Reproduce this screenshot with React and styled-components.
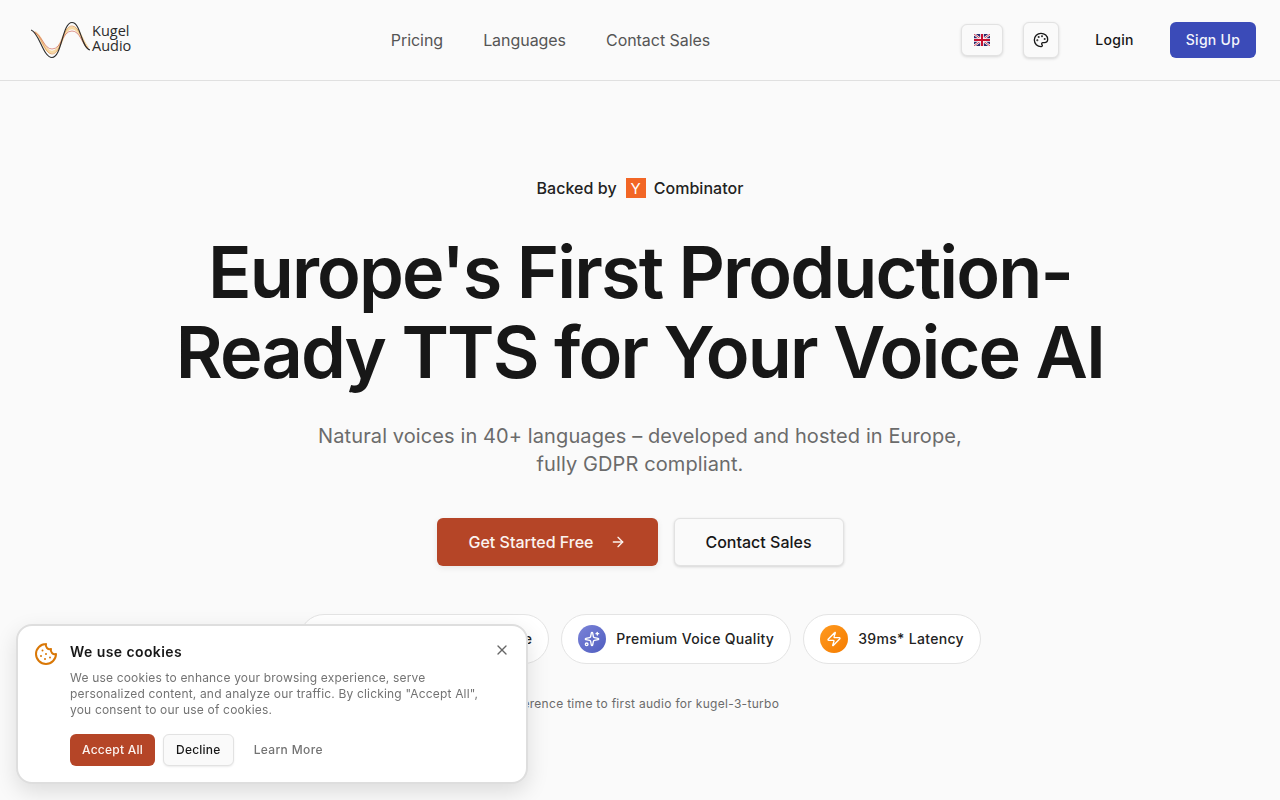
import React from "react";
import styled, { createGlobalStyle } from "styled-components";
import { ArrowRight, Cookie, Globe, Palette, Sparkles, X, Zap } from "lucide-react";

const Global = createGlobalStyle`
  html, body { margin: 0; padding: 0; background: #fafafa; }
  body { font-family: Inter, "Liberation Sans", sans-serif; color: #171717; overflow: hidden; }
  * { box-sizing: border-box; }
`;

const Page = styled.div`
  width: 1280px;
  height: 800px;
  background: #fafafa;
`;

const Header = styled.header`
  height: 81px;
  border-bottom: 1px solid #e0e0e0;
  padding: 0 24px;
  display: flex;
  align-items: center;
  justify-content: space-between;
`;

const Logo = styled.div`
  width: 116px;
  height: 48px;
  display: flex;
  align-items: center;
  padding-left: 7px;
`;

const LogoText = styled.div`
  font-family: "Open Sans", sans-serif;
  font-size: 14.5px;
  line-height: 15px;
  color: #2b2b2b;
  margin-left: 1px;
  margin-top: -4px;
`;

const Nav = styled.nav`
  display: flex;
  gap: 40px;
`;

const NavLink = styled.a`
  font-size: 16px;
  line-height: 24px;
  letter-spacing: -0.05px;
  color: #555;
`;

const Actions = styled.div`
  display: flex;
  align-items: center;
  gap: 20px;
`;

const IconButton = styled.button`
  width: ${(p) => p.$w}px;
  height: ${(p) => p.$h}px;
  padding: 0;
  display: flex;
  align-items: center;
  justify-content: center;
  background: #fafafa;
  border: 1px solid #e2e2e2;
  border-radius: 6px;
  box-shadow: 0 1px 3px rgba(0, 0, 0, 0.14);
  color: #171717;
`;

const Login = styled.a`
  width: 71px;
  margin-top: -1px;
  text-align: center;
  font-size: 14px;
  font-weight: 500;
  letter-spacing: 0.02em;
  color: #171717;
`;

const SignUp = styled.button`
  width: 86px;
  height: 36px;
  padding: 0 0 2px;
  border: 0;
  border-radius: 6px;
  background: #3b4bb8;
  color: #f4f5fc;
  font: 500 14px Inter, sans-serif;
  letter-spacing: 0.02em;
`;

const Hero = styled.main`
  display: flex;
  flex-direction: column;
  align-items: center;
  padding-top: 97px;
`;

const Backed = styled.div`
  display: flex;
  align-items: center;
  gap: 8px;
  height: 20px;
  font-size: 16px;
  font-weight: 500;
  letter-spacing: 0.05px;
  color: #222;
`;

const YBadge = styled.span`
  width: 20px;
  height: 20px;
  margin-left: 1px;
  display: flex;
  align-items: center;
  justify-content: center;
  background: #f26625;
  color: #fff;
  font-size: 15px;
  font-weight: 400;
`;

const Title = styled.h1`
  margin: 34px 0 0;
  width: 1000px;
  text-align: center;
  font-size: 72px;
  line-height: 80px;
  font-weight: 600;
  letter-spacing: -1.85px;
  color: #171717;
`;

const Sub = styled.p`
  margin: 30px 0 0;
  width: 672px;
  text-align: center;
  font-size: 20px;
  line-height: 28px;
  letter-spacing: 0.1px;
  color: #6b6b6b;
`;

const Cta = styled.div`
  display: flex;
  gap: 16px;
  margin-top: 40px;
`;

const Primary = styled.button`
  width: 221px;
  height: 48px;
  display: flex;
  align-items: center;
  justify-content: center;
  gap: 16px;
  border: 0;
  border-radius: 6px;
  background: #b54527;
  color: #fbf3f0;
  font: 500 16px Inter, sans-serif;
  box-shadow: 0 2px 6px rgba(0, 0, 0, 0.08);
`;

const Secondary = styled.button`
  width: 170px;
  height: 48px;
  border: 1px solid #e2e2e2;
  border-radius: 6px;
  background: #fafafa;
  color: #171717;
  font: 500 16px Inter, sans-serif;
  box-shadow: 0 1px 3px rgba(0, 0, 0, 0.16);
`;

const Pills = styled.div`
  display: flex;
  gap: 12px;
  margin-top: 48px;
`;

const Pill = styled.div`
  height: 50px;
  display: flex;
  align-items: center;
  gap: 10px;
  padding: 0 16px;
  background: #fff;
  border: 1px solid #e4e4e4;
  border-radius: 25px;
`;

const PillLabel = styled.span`
  margin-top: -1px;
  font-size: 14px;
  font-weight: 500;
  letter-spacing: 0.0225em;
  color: #222;
`;

const PillIcon = styled.span`
  width: 28px;
  height: 28px;
  border-radius: 50%;
  display: flex;
  align-items: center;
  justify-content: center;
  color: #fff;
  background: ${(p) => p.$bg};
`;

const Footnote = styled.p`
  margin: 32px 0 0;
  font-size: 12px;
  line-height: 16px;
  letter-spacing: 0.025em;
  color: #6b6b6b;
`;

const CookieCard = styled.aside`
  position: fixed;
  left: 16px;
  bottom: 16px;
  width: 512px;
  height: 160px;
  display: flex;
  gap: 12px;
  padding: 16px;
  background: #fff;
  border: 2px solid #dedede;
  border-radius: 16px;
  box-shadow: 0 8px 22px rgba(0, 0, 0, 0.12);
`;

const CookieIcon = styled.div`
  width: 24px;
  height: 24px;
  color: #d97706;
`;

const CookieBody = styled.div`
  flex: 1;
`;

const CookieHead = styled.div`
  display: flex;
  align-items: flex-start;
  justify-content: space-between;
  height: 18px;
`;

const CookieTitle = styled.h2`
  margin: 1px 0 0;
  font-size: 14px;
  line-height: 18px;
  font-weight: 600;
  letter-spacing: 0.03em;
  color: #171717;
`;

const Close = styled.button`
  border: 0;
  background: none;
  padding: 0;
  width: 16px;
  height: 16px;
  color: #666;
  display: flex;
`;

const CookieText = styled.p`
  margin: 10px 0 0;
  width: 420px;
  font-size: 12px;
  line-height: 16px;
  letter-spacing: 0.015em;
  color: #737373;
`;

const CookieActions = styled.div`
  display: flex;
  align-items: center;
  gap: 8px;
  margin-top: 16px;
`;

const Accept = styled.button`
  height: 32px;
  padding: 0 12px 2px;
  border: 0;
  border-radius: 6px;
  background: #b54527;
  color: #fbf3f0;
  font: 500 12px Inter, sans-serif;
  letter-spacing: 0.02em;
`;

const Decline = styled.button`
  height: 32px;
  padding: 0 12px 2px;
  border: 1px solid #e2e2e2;
  border-radius: 6px;
  background: #fafafa;
  color: #171717;
  font: 500 12px Inter, sans-serif;
  letter-spacing: 0.02em;
  box-shadow: 0 1px 2px rgba(0, 0, 0, 0.08);
`;

const LearnMore = styled.a`
  padding: 0 12px;
  margin-top: -2px;
  font-size: 12px;
  font-weight: 500;
  letter-spacing: 0.03em;
  color: #737373;
`;

const Wave = () => (
  <svg width="60" height="38" viewBox="0 0 60 38" fill="none">
    <path d="M4 11C11 15 13 31 21 31C31 31 31 7 41 7C49 7 51 21 57 27" stroke="#f6d9a4" strokeWidth="2.5" />
    <path d="M3 11C11 14 13 33 21 33C31 33 31 5 41 5C49 5 51 22 57 27.5" stroke="#e39a55" strokeWidth="0.8" />
    <path d="M3 11C11 14 13 28 21 28C31 28 31 10 41 10C49 10 51 23 57 27.5" stroke="#d0695f" strokeWidth="0.7" />
    <path d="M0 9C8 11 12 36.5 21 36.5C31 36.5 31 1.5 41 1.5C50 1.5 50 27 59 29" stroke="#2c2c2c" strokeWidth="1.1" />
  </svg>
);

const UkFlag = () => (
  <svg width="16" height="12" viewBox="0 0 16 12">
    <rect width="16" height="12" fill="#2b2a6b" />
    <path d="M0 0L16 12M16 0L0 12" stroke="#fff" strokeWidth="2.2" />
    <path d="M0 0L16 12M16 0L0 12" stroke="#c8102e" strokeWidth="0.8" />
    <path d="M8 0V12M0 6H16" stroke="#fff" strokeWidth="3.6" />
    <path d="M8 0V12M0 6H16" stroke="#c8102e" strokeWidth="2" />
  </svg>
);

export default function App() {
  return (
    <Page>
      <Global />
      <Header>
        <Logo>
          <Wave />
          <LogoText>Kugel<br />Audio</LogoText>
        </Logo>
        <Nav>
          <NavLink>Pricing</NavLink>
          <NavLink>Languages</NavLink>
          <NavLink>Contact Sales</NavLink>
        </Nav>
        <Actions>
          <IconButton $w={42} $h={32}><UkFlag /></IconButton>
          <IconButton $w={36} $h={36}><Palette size={16} /></IconButton>
          <Login>Login</Login>
          <SignUp>Sign Up</SignUp>
        </Actions>
      </Header>
      <Hero>
        <Backed>
          Backed by <YBadge>Y</YBadge> Combinator
        </Backed>
        <Title>Europe's First Production-Ready TTS for Your Voice AI</Title>
        <Sub>Natural voices in 40+ languages – developed and hosted in Europe, fully GDPR compliant.</Sub>
        <Cta>
          <Primary>Get Started Free <ArrowRight size={16} /></Primary>
          <Secondary>Contact Sales</Secondary>
        </Cta>
        <Pills>
          <Pill>
            <PillIcon $bg="#3b82f6"><Globe size={16} /></PillIcon>
            <PillLabel>GDPR-Safe Infrastructure</PillLabel>
          </Pill>
          <Pill>
            <PillIcon $bg="linear-gradient(135deg, #7b83d8, #4f5dbf)"><Sparkles size={16} /></PillIcon>
            <PillLabel>Premium Voice Quality</PillLabel>
          </Pill>
          <Pill>
            <PillIcon $bg="linear-gradient(135deg, #ff9a1f, #f57c00)"><Zap size={16} /></PillIcon>
            <PillLabel>39ms* Latency</PillLabel>
          </Pill>
        </Pills>
        <Footnote>*Inference time to first audio for kugel-3-turbo</Footnote>
      </Hero>
      <CookieCard>
        <CookieIcon><Cookie size={24} /></CookieIcon>
        <CookieBody>
          <CookieHead>
            <CookieTitle>We use cookies</CookieTitle>
            <Close><X size={16} /></Close>
          </CookieHead>
          <CookieText>
            We use cookies to enhance your browsing experience, serve personalized content, and analyze our traffic. By clicking "Accept All", you consent to our use of cookies.
          </CookieText>
          <CookieActions>
            <Accept>Accept All</Accept>
            <Decline>Decline</Decline>
            <LearnMore>Learn More</LearnMore>
          </CookieActions>
        </CookieBody>
      </CookieCard>
    </Page>
  );
}
